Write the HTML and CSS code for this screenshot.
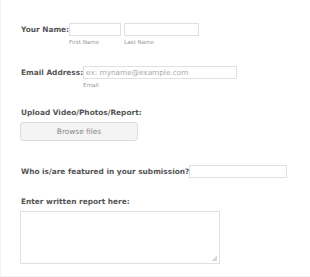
FILE: index.html
```
<!DOCTYPE html>
<html lang="en">
<head>
  <meta charset="UTF-8" />
  <title>Submission</title>
  <link rel="stylesheet" href="styles.css">
</head>
<body>

<form class="form">
  <div class="row row-name">
    <label class="label">Your Name:</label>
    <div class="field">
      <input type="text" class="input input-first" />
      <span class="sub">First Name</span>
    </div>
    <div class="field">
      <input type="text" class="input input-last" />
      <span class="sub">Last Name</span>
    </div>
  </div>

  <div class="row row-email">
    <label class="label">Email Address:</label>
    <div class="field">
      <input type="text" class="input input-email" placeholder="ex: myname@example.com" />
      <span class="sub">Email</span>
    </div>
  </div>

  <div class="block block-upload">
    <label class="label">Upload Video/Photos/Report:</label>
    <button type="button" class="browse">Browse files</button>
  </div>

  <div class="row row-who">
    <label class="label">Who is/are featured in your submission?</label>
    <input type="text" class="input input-who" />
  </div>

  <div class="block block-report">
    <label class="label">Enter written report here:</label>
    <textarea class="report"></textarea>
  </div>
</form>

</body>
</html>
```

FILE: styles.css
```
* {
  box-sizing: border-box;
  margin: 0;
  padding: 0;
}

body {
  font-family: "DejaVu Sans", Verdana, sans-serif;
  background: #fff;
}

.form {
  height: 277px;
  padding: 23px 0 0 20px;
  border-left: 1px solid #f2f2f2;
  border-bottom: 1px solid #f2f2f2;
}

.label {
  font-size: 7.4px;
  font-weight: bold;
  color: #555;
  line-height: 13px;
  white-space: nowrap;
}

.row {
  display: flex;
  align-items: flex-start;
}

.field {
  display: flex;
  flex-direction: column;
  margin-right: 3px;
}

.input {
  height: 13px;
  border: 1px solid #e0e0e0;
  font-family: inherit;
  font-size: 7.3px;
  color: #555;
  padding: 0 2px;
  outline: none;
}

.input::placeholder {
  color: #aaa;
}

.sub {
  font-size: 5.6px;
  color: #999;
  line-height: 8px;
  margin-top: 2px;
}

.input-first {
  width: 52px;
}

.input-last {
  width: 75px;
}

.input-email {
  width: 154px;
}

.input-who {
  width: 98px;
}

.row-email {
  margin-top: 20px;
}

.block {
  display: flex;
  flex-direction: column;
  align-items: flex-start;
}

.block-upload {
  margin-top: 17px;
}

.browse {
  margin: 3px 0 0 -1px;
  width: 118px;
  height: 19px;
  background: #f4f4f4;
  border: 1px solid #dcdcdc;
  border-radius: 3px;
  font-family: inherit;
  font-size: 7.4px;
  color: #888;
}

.row-who {
  margin-top: 24px;
}

.block-report {
  margin-top: 17px;
}

.report {
  margin: 3px 0 0 -1px;
  width: 200px;
  height: 53px;
  border: 1px solid #e0e0e0;
  outline: none;
  resize: none;
  background:
    linear-gradient(135deg, transparent 50%, #d6d6d6 50%) right 2px bottom 2px / 5px 5px no-repeat,
    #fff;
}
```
